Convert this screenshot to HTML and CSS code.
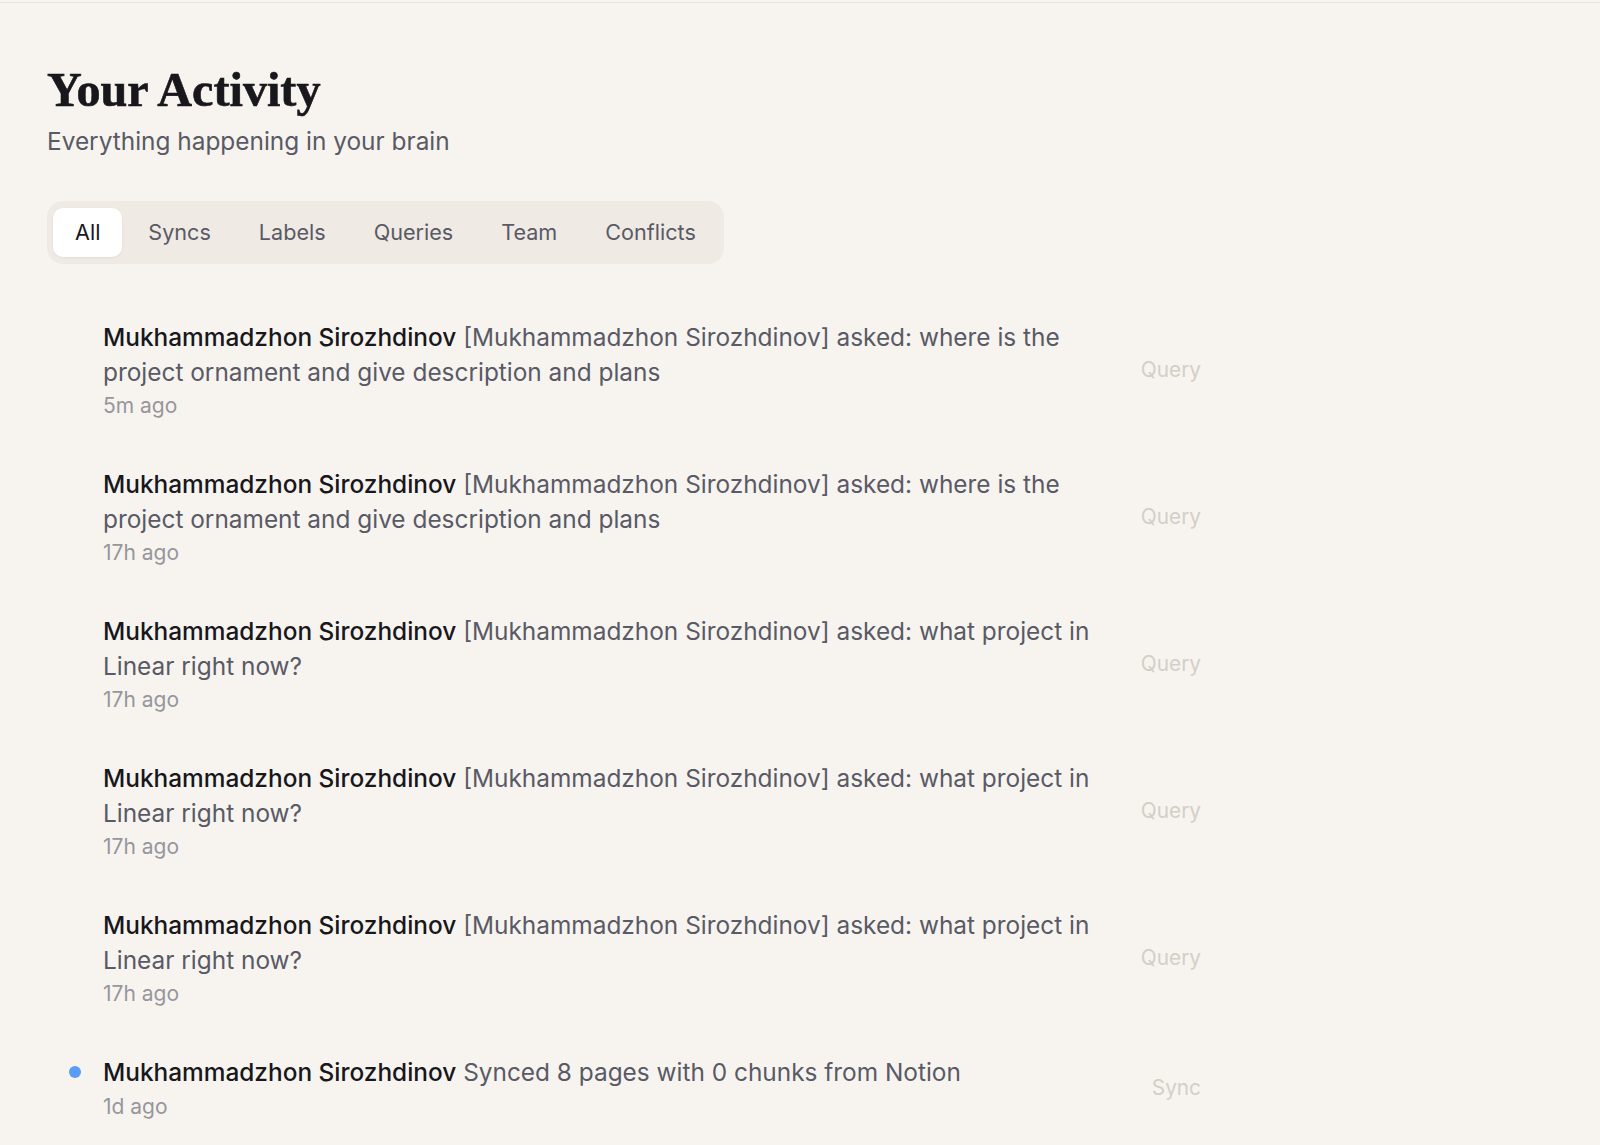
FILE: index.html
```html
<!DOCTYPE html>
<html lang="en">
<head>
    <meta charset="UTF-8">
    <meta name="viewport" content="width=device-width, initial-scale=1.0">
    <title>Your Activity</title>
    <link rel="stylesheet" href="styles.css">
</head>
<body>
    <div class="top-rule"></div>
    <main class="activity-page">
        <header class="page-header">
            <h1>Your Activity</h1>
            <p class="subtitle">Everything happening in your brain</p>
        </header>

        <nav class="tabs">
            <button class="tab active">All</button>
            <button class="tab">Syncs</button>
            <button class="tab">Labels</button>
            <button class="tab">Queries</button>
            <button class="tab">Team</button>
            <button class="tab">Conflicts</button>
        </nav>

        <ul class="feed">
            <li class="feed-item">
                <span class="marker"></span>
                <div class="feed-body">
                    <p class="feed-text"><span class="actor">Mukhammadzhon Sirozhdinov</span> <span class="action">[Mukhammadzhon Sirozhdinov] asked: where is the project ornament and give description and plans</span></p>
                    <span class="feed-time">5m ago</span>
                </div>
                <span class="feed-kind">Query</span>
            </li>
            <li class="feed-item">
                <span class="marker"></span>
                <div class="feed-body">
                    <p class="feed-text"><span class="actor">Mukhammadzhon Sirozhdinov</span> <span class="action">[Mukhammadzhon Sirozhdinov] asked: where is the project ornament and give description and plans</span></p>
                    <span class="feed-time">17h ago</span>
                </div>
                <span class="feed-kind">Query</span>
            </li>
            <li class="feed-item">
                <span class="marker"></span>
                <div class="feed-body">
                    <p class="feed-text"><span class="actor">Mukhammadzhon Sirozhdinov</span> <span class="action">[Mukhammadzhon Sirozhdinov] asked: what project in Linear right now?</span></p>
                    <span class="feed-time">17h ago</span>
                </div>
                <span class="feed-kind">Query</span>
            </li>
            <li class="feed-item">
                <span class="marker"></span>
                <div class="feed-body">
                    <p class="feed-text"><span class="actor">Mukhammadzhon Sirozhdinov</span> <span class="action">[Mukhammadzhon Sirozhdinov] asked: what project in Linear right now?</span></p>
                    <span class="feed-time">17h ago</span>
                </div>
                <span class="feed-kind">Query</span>
            </li>
            <li class="feed-item">
                <span class="marker"></span>
                <div class="feed-body">
                    <p class="feed-text"><span class="actor">Mukhammadzhon Sirozhdinov</span> <span class="action">[Mukhammadzhon Sirozhdinov] asked: what project in Linear right now?</span></p>
                    <span class="feed-time">17h ago</span>
                </div>
                <span class="feed-kind">Query</span>
            </li>
            <li class="feed-item">
                <span class="marker unread"></span>
                <div class="feed-body">
                    <p class="feed-text"><span class="actor">Mukhammadzhon Sirozhdinov</span> <span class="action">Synced 8 pages with 0 chunks from Notion</span></p>
                    <span class="feed-time">1d ago</span>
                </div>
                <span class="feed-kind">Sync</span>
            </li>
        </ul>
    </main>
</body>
</html>
```

FILE: styles.css
```css
:root {
    --page-bg: #f7f4ef;
    --rule: #e7e2da;
    --tab-track: #efeae3;
    --ink: #17171c;
    --text-body: #595a66;
    --text-muted: #96969c;
    --text-faint: #d3cfc8;
    --accent: #5b9cf7;
}

* {
    margin: 0;
    padding: 0;
    box-sizing: border-box;
}

body {
    background: var(--page-bg);
    font-family: 'Inter', 'Noto Sans', sans-serif;
    color: var(--ink);
    overflow: hidden;
}

.top-rule {
    height: 3px;
    border-bottom: 1px solid var(--rule);
}

.activity-page {
    padding: 0 47px;
}

.page-header {
    padding-top: 59px;
}

.page-header h1 {
    font-family: 'Liberation Serif', 'DejaVu Serif', serif;
    font-size: 48.2px;
    font-weight: 700;
    line-height: 56px;
    -webkit-text-stroke: 0.6px currentColor;
}

.subtitle {
    margin-top: 6px;
    font-size: 24.4px;
    line-height: 34px;
    color: var(--text-body);
}

/* Filter tabs */
.tabs {
    display: flex;
    width: fit-content;
    gap: 4px;
    margin-top: 43px;
    padding: 7px 6px;
    background: var(--tab-track);
    border-radius: 16px;
}

.tab {
    height: 49px;
    padding: 0 22px 2px;
    border: none;
    border-radius: 10px;
    background: transparent;
    font-family: inherit;
    font-size: 21.6px;
    color: var(--text-body);
    cursor: pointer;
}

.tab.active {
    background: #fff;
    color: var(--ink);
    box-shadow: 0 1px 3px rgba(0, 0, 0, 0.06);
}

/* Activity feed */
.feed {
    list-style: none;
    width: 1153px;
    margin-top: 34px;
}

.feed-item {
    display: grid;
    grid-template-columns: 56px 1fr auto;
    column-gap: 32px;
    padding: 22px 0 21.5px;
}

.feed-item .feed-body {
    margin-left: -32px;
}

.marker {
    width: 12px;
    height: 12px;
    margin: 11px 0 0 22px;
    border-radius: 50%;
}

.marker.unread {
    background: var(--accent);
}

.feed-text {
    font-size: 24.4px;
    line-height: 34.5px;
    color: var(--text-body);
}

.actor {
    color: var(--ink);
    font-weight: 500;
}

.feed-time {
    display: block;
    font-size: 21px;
    line-height: 34.5px;
    color: var(--text-muted);
}

.feed-kind {
    align-self: center;
    margin: 0 -1px 4px 0;
    font-size: 20.8px;
    color: var(--text-faint);
}
```
